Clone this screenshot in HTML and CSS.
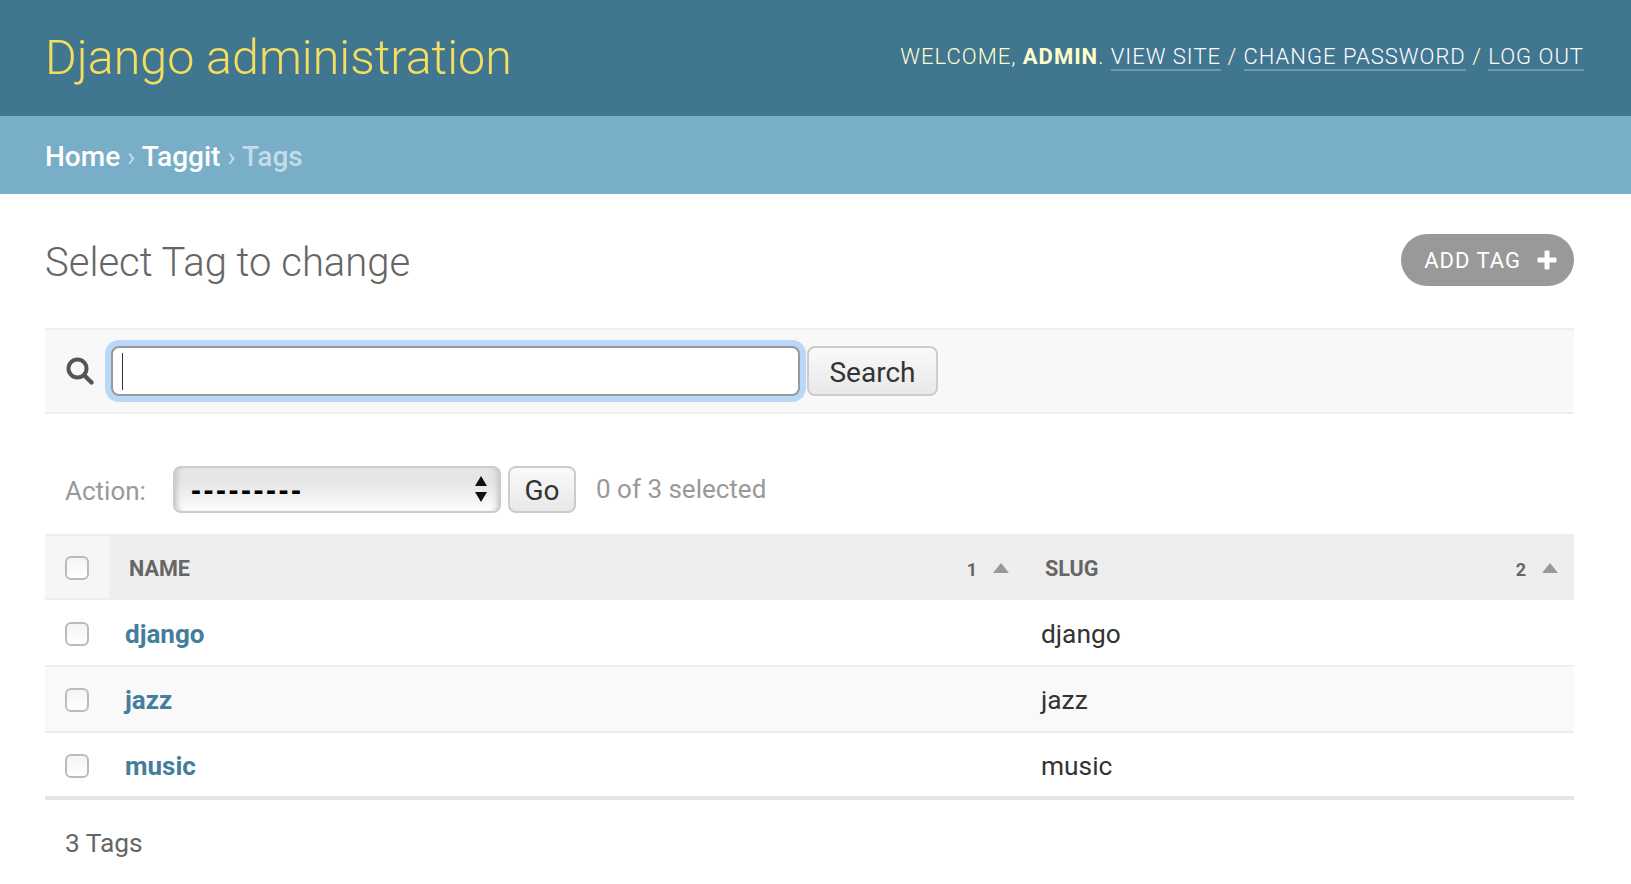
FILE: index.html
```html
<!DOCTYPE html>
<html lang="en">
<head>
    <meta charset="UTF-8">
    <title>Select Tag to change | Django site admin</title>
    <link rel="stylesheet" href="styles.css">
</head>
<body>
    <header class="site-header">
        <div class="branding">Django administration</div>
        <div class="user-tools">
            Welcome, <strong>admin</strong>.
            <a href="#">View site</a> /
            <a href="#">Change password</a> /
            <a href="#">Log out</a>
        </div>
    </header>

    <nav class="breadcrumbs">
        <a href="#">Home</a> <span class="sep">›</span>
        <a href="#">Taggit</a> <span class="sep">›</span>
        Tags
    </nav>

    <main class="content">
        <div class="title-row">
            <h1>Select Tag to change</h1>
            <a class="add-btn" href="#">
                Add tag
                <svg class="plus" viewBox="0 0 20 20" width="20" height="20">
                    <path d="M7.5 1.5a1 1 0 0 1 1-1h3a1 1 0 0 1 1 1v6h6a1 1 0 0 1 1 1v3a1 1 0 0 1-1 1h-6v6a1 1 0 0 1-1 1h-3a1 1 0 0 1-1-1v-6h-6a1 1 0 0 1-1-1v-3a1 1 0 0 1 1-1h6z" fill="#fff"/>
                </svg>
            </a>
        </div>

        <form class="search-bar">
            <svg class="search-icon" viewBox="0 0 28 28" width="28" height="28">
                <circle cx="11.5" cy="11.5" r="9" fill="none" stroke="#555" stroke-width="4"/>
                <path d="M18.5 18.5l7 7" stroke="#555" stroke-width="4.4" stroke-linecap="round"/>
            </svg>
            <div class="search-input-wrap">
                <input class="search-input" type="text">
                <span class="caret"></span>
            </div>
            <button class="btn search-btn" type="button">Search</button>
        </form>

        <div class="actions">
            <label class="action-label">Action:</label>
            <div class="select-wrap">
                <select class="action-select">
                    <option>---------</option>
                </select>
                <svg class="select-arrows" viewBox="0 0 14 26" width="14" height="26">
                    <path d="M7 0l6 10H1zM7 26l-6-10h12z" fill="#111"/>
                </svg>
            </div>
            <button class="btn go-btn" type="button">Go</button>
            <span class="counter">0 of 3 selected</span>
        </div>

        <table class="results">
            <colgroup>
                <col class="col-check">
                <col class="col-name">
                <col>
            </colgroup>
            <thead>
                <tr>
                    <th class="check-head"><input class="check" type="checkbox"></th>
                    <th>
                        <div class="th-inner">
                            <span>Name</span>
                            <span class="sort"><span class="sort-num">1</span><span class="sort-up"></span></span>
                        </div>
                    </th>
                    <th>
                        <div class="th-inner">
                            <span>Slug</span>
                            <span class="sort"><span class="sort-num">2</span><span class="sort-up"></span></span>
                        </div>
                    </th>
                </tr>
            </thead>
            <tbody>
                <tr>
                    <td class="check-cell"><input class="check" type="checkbox"></td>
                    <td><a class="row-link" href="#">django</a></td>
                    <td>django</td>
                </tr>
                <tr class="alt">
                    <td class="check-cell"><input class="check" type="checkbox"></td>
                    <td><a class="row-link" href="#">jazz</a></td>
                    <td>jazz</td>
                </tr>
                <tr>
                    <td class="check-cell"><input class="check" type="checkbox"></td>
                    <td><a class="row-link" href="#">music</a></td>
                    <td>music</td>
                </tr>
            </tbody>
        </table>

        <p class="paginator">3 Tags</p>
    </main>
</body>
</html>
```

FILE: styles.css
```css
* {
    box-sizing: border-box;
}
body {
    margin: 0;
    font-family: Roboto, "Liberation Sans", sans-serif;
    color: #333;
    background-color: #fff;
}
a {
    text-decoration: none;
}

.site-header {
    display: flex;
    justify-content: space-between;
    align-items: center;
    height: 116px;
    padding: 0 47px 0 45px;
    background-color: #417690;
}
.branding {
    padding-bottom: 2px;
    font-size: 48.4px;
    font-weight: 300;
    color: #f5dd5d;
}
.user-tools {
    padding-bottom: 4px;
    font-size: 22px;
    font-weight: 300;
    letter-spacing: 1px;
    text-transform: uppercase;
    color: #ffc;
}
.user-tools strong {
    font-weight: 700;
}
.user-tools a {
    color: #fff;
    border-bottom: 2px solid rgba(255, 255, 255, 0.25);
}

.breadcrumbs {
    height: 78px;
    padding: 0 45px;
    line-height: 82px;
    font-size: 28px;
    font-weight: 500;
    color: #c4dce8;
    background-color: #79aec8;
}
.breadcrumbs a {
    color: #fff;
}
.sep {
    font-weight: 400;
}

.content {
    padding: 0 57px 0 45px;
}
.title-row {
    display: flex;
    justify-content: space-between;
    align-items: center;
    height: 134px;
    padding-bottom: 2px;
}
h1 {
    margin: 0;
    padding-top: 4px;
    font-size: 40px;
    font-weight: 300;
    color: #666;
}
.add-btn {
    display: flex;
    align-items: center;
    gap: 16px;
    height: 52px;
    padding: 0 17px 0 23px;
    border-radius: 26px;
    font-size: 22px;
    letter-spacing: 1px;
    text-transform: uppercase;
    color: #fff;
    background-color: #999;
}

.search-bar {
    display: flex;
    align-items: center;
    height: 86px;
    padding-left: 21px;
    background-color: #f8f8f8;
    border-top: 2px solid #eee;
    border-bottom: 2px solid #eee;
}
.search-input-wrap {
    position: relative;
    margin-left: 17px;
}
.search-input {
    display: block;
    width: 689px;
    height: 50px;
    border: 2px solid #999;
    border-radius: 8px;
    background-color: #fff;
    box-shadow: 0 0 0 6px #b9d8f8;
    outline: none;
}
.caret {
    position: absolute;
    left: 11px;
    top: 7px;
    width: 1px;
    height: 37px;
    background-color: #333;
}
.btn {
    height: 48px;
    padding: 3px 0 0;
    border: 2px solid #ccc;
    border-radius: 8px;
    font-family: inherit;
    font-size: 28px;
    color: #333;
    background: linear-gradient(#fafafa, #e8e8e8);
}
.search-btn {
    width: 131px;
    height: 50px;
    margin-left: 7px;
}

.actions {
    display: flex;
    align-items: center;
    height: 47px;
    margin-top: 52px;
    padding-left: 20px;
    font-size: 26px;
    color: #999;
}
.action-label {
    width: 108px;
    padding-top: 3px;
}
.select-wrap {
    position: relative;
}
.action-select {
    display: block;
    width: 328px;
    height: 47px;
    padding-left: 16px;
    border: 2px solid #ccc;
    border-radius: 8px;
    appearance: none;
    font-family: "Liberation Sans", sans-serif;
    font-size: 30px;
    font-weight: 700;
    letter-spacing: 2.5px;
    color: #000;
    background: linear-gradient(#e6e6e6 35%, #fdfdfd);
    box-shadow: inset 6px 0 6px -5px #bbb, inset -6px 0 6px -5px #bbb;
}
.select-arrows {
    position: absolute;
    top: 10px;
    right: 13px;
}
.go-btn {
    width: 68px;
    height: 47px;
    margin-left: 7px;
    padding-top: 1px;
}
.counter {
    margin-left: 20px;
    padding-bottom: 2px;
}

.results {
    width: 100%;
    margin-top: 21px;
    border-collapse: collapse;
    table-layout: fixed;
    border-bottom: 4px solid #e6e6e6;
}
.col-check {
    width: 64px;
}
.col-name {
    width: 916px;
}
.results th {
    height: 66px;
    padding: 2px 16px 0 20px;
    font-size: 21.6px;
    font-weight: 700;
    text-align: left;
    text-transform: uppercase;
    color: #666;
    background-color: #eee;
}
.results th.check-head {
    padding: 4px 0 2px 20px;
    background-color: #f6f6f6;
    box-shadow: inset 0 2px 0 #eee, inset 0 -2px 0 #eee;
}
.th-inner {
    display: flex;
    justify-content: space-between;
    align-items: center;
}
.sort {
    display: flex;
    align-items: center;
    gap: 16px;
}
.sort-num {
    font-size: 18px;
    padding-top: 2px;
}
.sort-up {
    width: 0;
    height: 0;
    border-left: 8px solid transparent;
    border-right: 8px solid transparent;
    border-bottom: 10px solid #999;
}
.results td {
    height: 66px;
    padding: 2px 16px 0;
    font-size: 26.3px;
    border-bottom: 2px solid #eee;
}
.results td.check-cell {
    padding-left: 20px;
}
.results tbody tr:last-child td {
    border-bottom: none;
}
.alt {
    background-color: #f9f9f9;
}
.check {
    display: block;
    width: 24px;
    height: 24px;
    margin: 0;
    appearance: none;
    border: 2px solid #bbb;
    border-radius: 6px;
    background: linear-gradient(#f4f4f4, #fff);
}
.row-link {
    font-size: 26px;
    font-weight: 700;
    color: #447e9b;
}

.paginator {
    margin: 0;
    padding: 28px 0 0 20px;
    font-size: 26.3px;
    color: #666;
}
```
